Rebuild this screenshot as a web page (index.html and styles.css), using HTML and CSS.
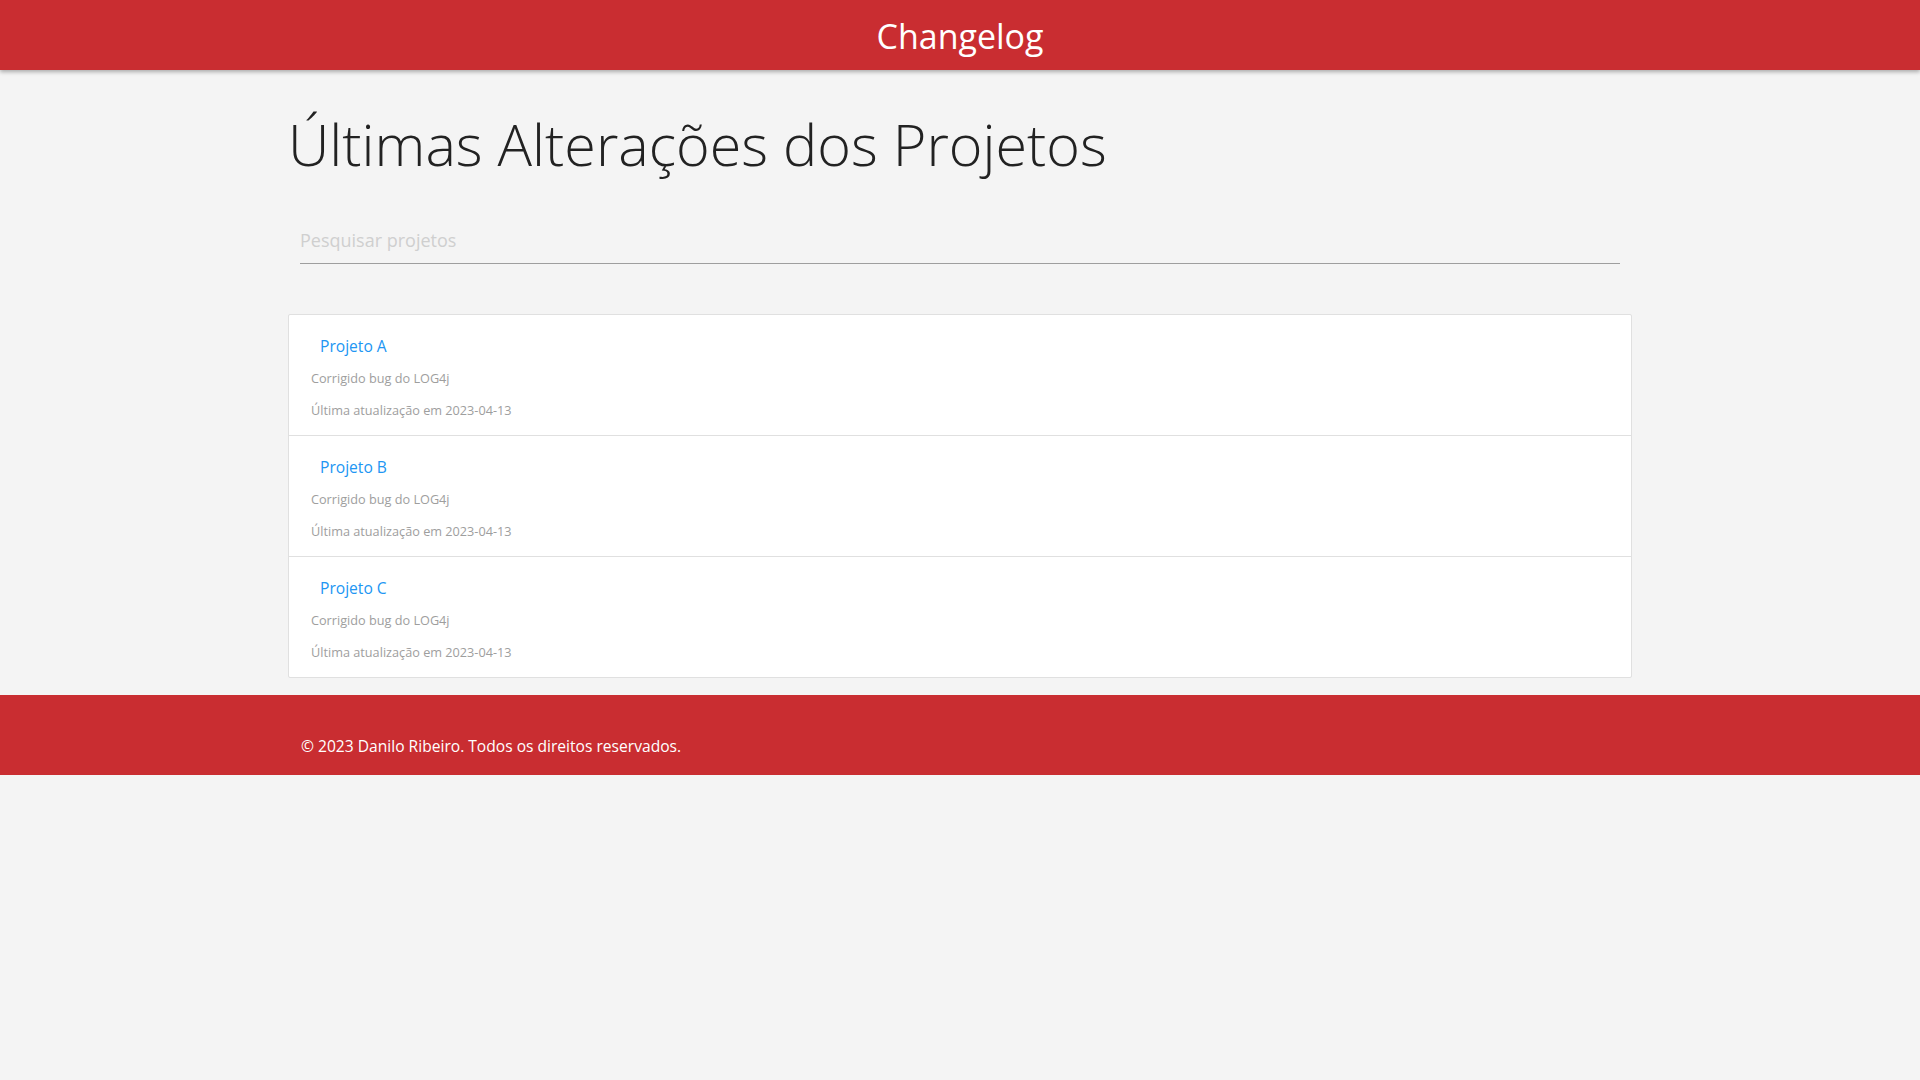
FILE: index.html
```html
<!DOCTYPE html>
<html lang="pt-BR">
<head>
<meta charset="utf-8">
<title>Changelog</title>
<link rel="stylesheet" href="styles.css">
</head>
<body>
<header class="topbar">
  <h1 class="brand">Changelog</h1>
</header>
<main class="container">
  <h2 class="page-title">Últimas Alterações dos Projetos</h2>
  <div class="search">
    <input class="search-input" type="text" placeholder="Pesquisar projetos">
  </div>
  <ul class="collection">
    <li class="item">
      <a class="item-title" href="#">Projeto A</a>
      <p class="item-text">Corrigido bug do LOG4j</p>
      <p class="item-text">Última atualização em 2023-04-13</p>
    </li>
    <li class="item">
      <a class="item-title" href="#">Projeto B</a>
      <p class="item-text">Corrigido bug do LOG4j</p>
      <p class="item-text">Última atualização em 2023-04-13</p>
    </li>
    <li class="item">
      <a class="item-title" href="#">Projeto C</a>
      <p class="item-text">Corrigido bug do LOG4j</p>
      <p class="item-text">Última atualização em 2023-04-13</p>
    </li>
  </ul>
</main>
<footer class="footer">
  <div class="footer-inner">© 2023 Danilo Ribeiro. Todos os direitos reservados.</div>
</footer>
</body>
</html>
```
FILE: styles.css
```css
* { box-sizing: border-box; }
html, body { margin: 0; padding: 0; }
body {
  background: #f4f4f4;
  font-family: "Open Sans", "Noto Sans", sans-serif;
  color: #222;
}
.topbar {
  height: 70px;
  background: #c92d31;
  box-shadow: 0 2px 4px rgba(0,0,0,0.3);
  display: flex;
  justify-content: center;
  align-items: center;
  position: relative;
  z-index: 1;
}
.brand {
  margin: 0;
  padding-top: 2px;
  color: #fff;
  font-size: 34px;
  font-weight: 400;
  line-height: 68px;
}
.container {
  width: 1344px;
  margin: 0 auto;
}
.page-title {
  margin: 43px 0 0 0;
  font-size: 57.5px;
  line-height: 1.1;
  font-weight: 350;
  color: #222;
}
.search {
  padding: 0 12px;
  margin-top: 41px;
}
.search-input {
  display: block;
  width: 100%;
  height: 47px;
  border: none;
  border-bottom: 1px solid #9e9e9e;
  background: transparent;
  padding: 0;
  font-family: inherit;
  font-size: 18px;
  color: #222;
  outline: none;
}
.search-input::placeholder { color: #cfcfcf; }
.collection {
  list-style: none;
  margin: 50px 0 0 0;
  padding: 0;
  background: #fff;
  border: 1px solid #e0e0e0;
  border-radius: 2px;
}
.item {
  height: 121px;
  padding: 15px 22px 9px;
  border-bottom: 1px solid #e0e0e0;
}
.item:last-child { border-bottom: none; height: 120px; }
.item-title {
  display: block;
  padding-left: 9px;
  font-size: 15.6px;
  line-height: 32px;
  color: #2196f3;
  text-decoration: none;
}
.item-text {
  margin: 0;
  font-size: 12.7px;
  line-height: 32px;
  color: #9e9e9e;
}
.footer {
  margin-top: 17px;
  height: 80px;
  background: #c92d31;
}
.footer-inner {
  width: 1344px;
  margin: 0 auto;
  padding: 39px 13px 0;
  font-size: 15.6px;
  line-height: 24px;
  color: #fff;
}
```
